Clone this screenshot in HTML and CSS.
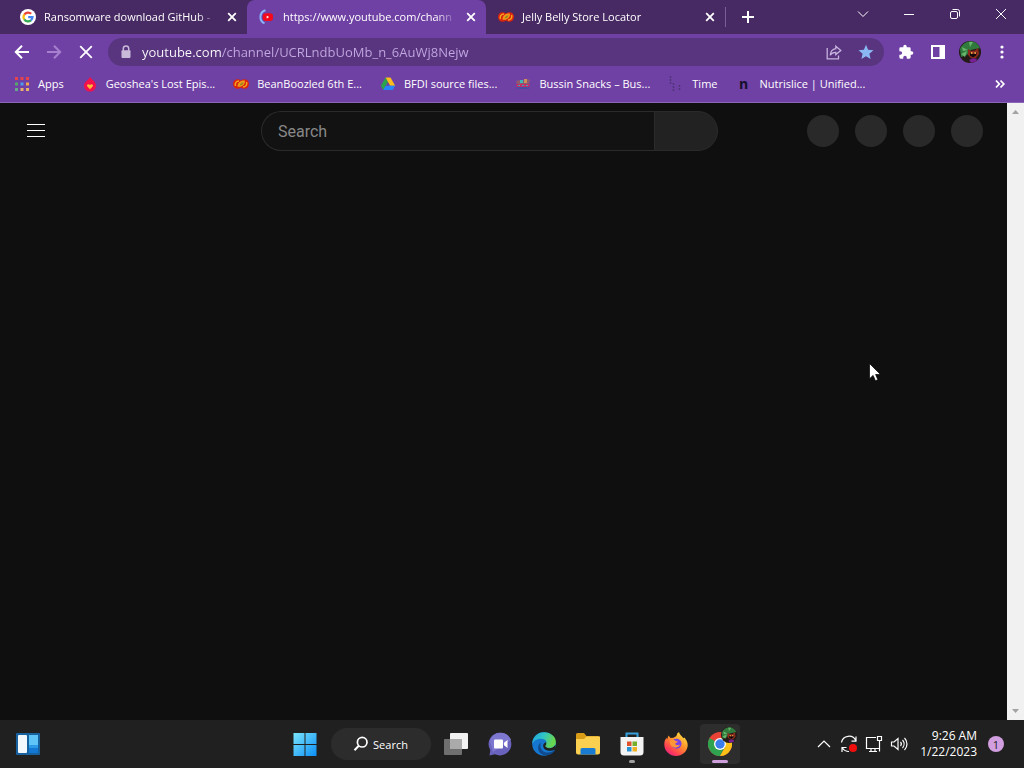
FILE: index.html
```html
<!DOCTYPE html>
<html lang="en">
<head>
  <meta charset="UTF-8" />
  <meta name="viewport" content="width=device-width, initial-scale=1.0"/>
  <title>Desktop</title>
  <link rel="stylesheet" href="styles.css">
</head>
<body>
  <svg class="defs" aria-hidden="true">
    <symbol id="close" viewBox="0 0 16 16"><path d="M4.2 4.2l7.6 7.6M11.8 4.2l-7.6 7.6" stroke="#fff" stroke-width="1.8"/></symbol>
    <symbol id="bean" viewBox="0 0 16 16">
      <ellipse cx="4.600" cy="8" rx="4.600" ry="4.800" fill="#d9240f"/>
      <ellipse cx="11.400" cy="8" rx="4.600" ry="4.800" fill="#d9240f"/>
      <path d="M2.500 10C1.500 7 3.500 5 6 5M13.500 6c1 3-1 5-3.500 5" stroke="#f6a31e" stroke-width="1.500" fill="none"/>
      <path d="M4.500 10.500C4.500 6.500 8 4 12 4.700 12 9 8.500 11.500 4.500 10.500z" fill="#f39a1b"/>
      <path d="M6.500 9.500c.5-2 2-3 4-3.300-.2 2-1.800 3.300-4 3.300z" fill="#96891d"/>
    </symbol>
    <symbol id="avatar" viewBox="0 0 22 22">
      <circle cx="11" cy="11" r="11" fill="#241a16"/>
      <path d="M1 8C3 3 8 0 12 0.300c5 .4 8 3.700 9 7l-5 .7-4 1-4 5-6 2z" fill="#2f7a3c"/>
      <path d="M3 6l6 3-5 1zM10 1l1 5 3-5zM2 13l6-3-2 6z" fill="#69b46c"/>
      <path d="M9 8l3 2 4-.5 3-2.500 1 6-3 4h-5l-3-3z" fill="#8c2a1c"/>
      <path d="M11 11.500l3 1.500 4-1.500-1 3-3 2-3-2z" fill="#140b0c"/>
      <circle cx="12.700" cy="12" r="1" fill="#f0a046"/>
      <circle cx="16.200" cy="12" r="1" fill="#f0a046"/>
      <path d="M10 19l4-2 4 1-1 2.500-5 1.300z" fill="#7a1f93"/>
    </symbol>
  </svg>

  <header class="browser">
    <div class="tab-strip">
      <div class="tab">
        <svg class="icon16" viewBox="0 0 16 16">
          <circle cx="8" cy="8" r="8" fill="#fff"/>
          <g fill="none" stroke-width="2.2">
            <path d="M4.300 5.600A4.500 4.500 0 0 1 11.200 4.800" stroke="#ea4335"/>
            <path d="M4.300 10.500A4.500 4.500 0 0 1 4.300 5.500" stroke="#fbbc05"/>
            <path d="M11 11.400A4.500 4.500 0 0 1 4.300 10.400" stroke="#34a853"/>
            <path d="M8.200 8.100H12.500A4.500 4.500 0 0 1 11 11.400" stroke="#4285f4"/>
          </g>
        </svg>
        <button class="tab-title">Ransomware download GitHub -</button>
        <button class="tab-close" aria-label="Close tab"><svg class="icon16"><use href="#close"/></svg></button>
      </div>
      <div class="tab active">
        <svg class="icon16" viewBox="0 0 16 16">
          <path d="M6.500 1.300A7 7 0 0 0 5.500 14.400" fill="none" stroke="#8ab4f8" stroke-width="2"/>
          <rect x="3.800" y="4.200" width="10.200" height="7.800" rx="3" fill="#f3091c"/>
          <path d="M7.700 6.700l2.400 1.400-2.400 1.400z" fill="#fff"/>
        </svg>
        <button class="tab-title">https://www.youtube.com/chann</button>
        <button class="tab-close" aria-label="Close tab"><svg class="icon16"><use href="#close"/></svg></button>
      </div>
      <div class="tab">
        <svg class="icon16"><use href="#bean"/></svg>
        <button class="tab-title">Jelly Belly Store Locator</button>
        <button class="tab-close" aria-label="Close tab"><svg class="icon16"><use href="#close"/></svg></button>
      </div>
      <button class="new-tab" aria-label="New tab">
        <svg class="icon16" viewBox="0 0 16 16"><path d="M8 2v12M2 8h12" stroke="#fff" stroke-width="2"/></svg>
      </button>
      <div class="window-controls">
        <button aria-label="Search tabs"><svg class="icon16" viewBox="0 0 16 16"><path d="M3 5.500l5 5 5-5"/></svg></button>
        <button aria-label="Minimize"><svg class="icon16" viewBox="0 0 16 16"><path d="M3 8.500h10"/></svg></button>
        <button aria-label="Restore"><svg class="icon16" viewBox="0 0 16 16"><rect x="3.500" y="5.500" width="7" height="7" rx="1.500"/><path d="M5.500 3.500h5a2 2 0 0 1 2 2v5"/></svg></button>
        <button aria-label="Close"><svg class="icon16" viewBox="0 0 16 16"><path d="M3 3l10 10M13 3L3 13"/></svg></button>
      </div>
    </div>

    <div class="toolbar">
      <button class="tool" aria-label="Back"><svg class="icon16" viewBox="0 0 16 16"><path d="M15 8H2M8 1.800L1.800 8 8 14.200" fill="none" stroke="#fff" stroke-width="2"/></svg></button>
      <button class="tool" aria-label="Forward"><svg class="icon16" viewBox="0 0 16 16"><path d="M1 8h13M8 1.800L14.200 8 8 14.200" fill="none" stroke="#a680cf" stroke-width="2"/></svg></button>
      <button class="tool" aria-label="Stop"><svg class="icon16" viewBox="0 0 16 16"><path d="M2.200 2.200l11.600 11.600M13.800 2.200L2.200 13.800" stroke="#fff" stroke-width="1.800"/></svg></button>
      <div class="omnibox">
        <svg class="icon16" viewBox="0 0 16 16"><path d="M5.300 7V4.600a2.700 2.700 0 0 1 5.400 0V7" fill="none" stroke="#c9bad9" stroke-width="1.500"/><rect x="3.500" y="6.300" width="9" height="7.700" rx="1" fill="#c9bad9"/></svg>
        <input class="url" type="text" aria-label="Address" spellcheck="false" value="youtube.com/channel/UCRLndbUoMb_n_6AuWj8Nejw">
        <button class="tool" aria-label="Share"><svg class="icon16" viewBox="0 0 16 16" fill="none" stroke="#c6b2dd" stroke-width="1.300"><path d="M1.200 4v10.800h11.300V11.500"/><path d="M9.800 2.200l5 4.200-5 4.200V8.300C7.200 8.200 5.600 9 4.200 11.200c.3-3.500 2.200-6.100 5.600-6.600z"/></svg></button>
        <button class="tool" aria-label="Bookmark"><svg class="icon16" viewBox="0 0 16 16"><path d="M8 .8l2.100 4.900 5.400.5-4.100 3.600 1.200 5.200L8 12.200 3.400 15l1.200-5.200L.5 6.200l5.400-.5z" fill="#8ab8f2"/></svg></button>
      </div>
      <button class="tool" aria-label="Extensions"><svg class="icon16" viewBox="0 0 24 24"><path d="M20.500 11H19V7a2 2 0 0 0-2-2h-4V3.500a2.500 2.500 0 0 0-5 0V5H4a2 2 0 0 0-2 2v3.800h1.500a2.700 2.700 0 0 1 0 5.400H2V20a2 2 0 0 0 2 2h3.800v-1.500a2.700 2.700 0 0 1 5.400 0V22H17a2 2 0 0 0 2-2v-4h1.500a2.500 2.500 0 0 0 0-5z" fill="#fff"/></svg></button>
      <button class="tool" aria-label="Side panel"><svg class="icon16" viewBox="0 0 16 16"><path fill-rule="evenodd" d="M1 1h14v14H1zM3 3v10h6.500V3z" fill="#fff"/></svg></button>
      <button class="tool" aria-label="Profile"><svg class="avatar"><use href="#avatar"/></svg></button>
      <button class="tool" aria-label="Menu"><svg class="icon16" viewBox="0 0 16 16" fill="#fff"><circle cx="8" cy="3" r="1.600"/><circle cx="8" cy="8" r="1.600"/><circle cx="8" cy="13" r="1.600"/></svg></button>
    </div>

    <nav class="bookmarks">
      <a href="#">
        <svg class="icon16" viewBox="0 0 16 16">
          <path d="M1 1h3v3H1zM6.500 1h3v3h-3zM12 1h3v3h-3z" fill="#e8434a"/>
          <path d="M1 6.500h3v3H1z" fill="#55a86a"/><path d="M6.500 6.500h3v3h-3z" fill="#4d9df0"/><path d="M12 6.500h3v3h-3z" fill="#f0a94a"/>
          <path d="M1 12h3v3H1z" fill="#68a987"/><path d="M6.500 12h3v3h-3zM12 12h3v3h-3z" fill="#e7b06b"/>
        </svg>
        <span>Apps</span>
      </a>
      <a href="#">
        <svg class="icon16" viewBox="0 0 16 16"><path d="M8 .8c1 2.700 6 4.400 6 9A5.800 5.800 0 0 1 8 15.500a5.800 5.800 0 0 1-6-5.700C2 5.800 7 4 8 .8z" fill="#f4104c"/><path d="M8 13.200L5.200 10.300c-.9-1.400.9-3 2.800-1.400 1.900-1.600 3.700 0 2.800 1.400z" fill="#ffba3a"/></svg>
        <span>Geoshea's Lost Epis...</span>
      </a>
      <a href="#">
        <svg class="icon16"><use href="#bean"/></svg>
        <span>BeanBoozled 6th E...</span>
      </a>
      <a href="#">
        <svg class="icon16" viewBox="0 0 16 16"><path d="M5.500 1.500L8 5.800 3.300 14 .8 9.700z" fill="#2ba24c"/><path d="M5.500 1.500h5l4.700 8.200h-5z" fill="#fbbc1c"/><path d="M5.700 9.700h9.500L12.700 14H3.300z" fill="#2684fc"/></svg>
        <span>BFDI source files...</span>
      </a>
      <a href="#">
        <svg class="icon16" viewBox="0 0 16 16"><path d="M1 5l4-1 3 1 4-2 3 1-1 4H2z" fill="#8d5a72"/><path d="M5 4h3v3H5z" fill="#3fb5b7"/><path d="M9 3h3v4H9z" fill="#d08e5b"/><path d="M1 8h14l-1 3H2z" fill="#c12f69"/><path d="M2 12h12" stroke="#3d50a0" stroke-width="1.500"/><path d="M3 9.500h2M7 9.500h2M11 9.500h2" stroke="#38a6bd"/></svg>
        <span>Bussin Snacks – Bus...</span>
      </a>
      <a href="#">
        <svg class="icon16" viewBox="0 0 16 16" stroke="#50347a" stroke-width="1.500" stroke-dasharray="2 1"><path d="M2.500 0v8M5.500 7v8M11.500 9v6"/></svg>
        <span>Time</span>
      </a>
      <a href="#">
        <span class="n-mark">n</span>
        <span>Nutrislice | Unified...</span>
      </a>
      <button class="more" aria-label="More bookmarks"><svg class="icon16" viewBox="0 0 16 16"><path d="M4 4.500L7.300 8 4 11.500M8.500 4.500L11.800 8l-3.300 3.500" fill="none" stroke="#fff" stroke-width="1.800"/></svg></button>
    </nav>
  </header>

  <main class="viewport">
    <div class="page">
      <div class="masthead">
        <div class="masthead-start">
          <button class="guide" aria-label="Guide"><svg class="icon24" viewBox="0 0 24 24"><path d="M3 5.500h18M3 11.500h18M3 17.500h18" stroke="#fff"/></svg></button>
        </div>
        <form class="search">
          <input type="text" placeholder="Search" aria-label="Search">
          <button type="button" aria-label="Submit search"></button>
        </form>
        <div class="placeholders">
          <span></span><span></span><span></span><span></span>
        </div>
      </div>
    </div>
    <div class="scrollbar">
      <button aria-label="Scroll up"><svg class="arrow" viewBox="0 0 9 5"><path d="M4.500 0L9 5H0z"/></svg></button>
      <button aria-label="Scroll down"><svg class="arrow" viewBox="0 0 9 5"><path d="M0 0h9L4.500 5z"/></svg></button>
    </div>
  </main>

  <footer class="taskbar">
    <div class="widgets">
      <button class="task" aria-label="Widgets">
        <svg class="icon24" viewBox="0 0 24 24"><rect y="1" width="24" height="22" rx="1" fill="#17619f"/><rect x="2" y="3" width="9" height="18" rx="1" fill="#f2f8fc"/><rect x="13" y="3" width="9" height="10" fill="#5fc4f8"/><path d="M13 13h9v8h-9z" fill="#1378d4"/><path d="M13 13h9v3h-9z" fill="#2a9ae8"/></svg>
      </button>
    </div>

    <div class="apps">
      <button class="task" aria-label="Start">
        <svg class="icon24" viewBox="0 0 24 24"><defs><linearGradient id="win" x1="0" y1="0" x2="1" y2="1"><stop offset="0" stop-color="#7be5fc"/><stop offset="1" stop-color="#0b8ef5"/></linearGradient></defs><path d="M.5 1H11.500v11H.5zM12.500 1h11v11h-11zM.5 13h11v11H.5zM12.500 13h11v11h-11z" fill="url(#win)"/></svg>
      </button>
      <button class="task-search">
        <svg class="icon16" viewBox="0 0 16 16"><circle cx="9.200" cy="6.200" r="4.800" fill="none" stroke="#fff" stroke-width="1.700"/><path d="M5.800 9.800L1.500 14.200" stroke="#fff" stroke-width="2"/></svg>
        <span>Search</span>
      </button>
      <button class="task" aria-label="Task view">
        <svg class="icon24" viewBox="0 0 24 24"><rect x="6" y="1" width="18" height="16" rx="1" fill="#f1f1f1"/><rect y="7" width="18" height="16" rx="1" fill="#6f6f6f"/><path d="M6 7h12v10H6z" fill="#aaa"/></svg>
      </button>
      <button class="task" aria-label="Chat">
        <svg class="icon24" viewBox="0 0 24 24"><path d="M12.500.8A11.300 11.300 0 1 1 7 22.200L1.500 23.500 2.300 18A11.300 11.300 0 0 1 12.500.8z" fill="#6963bd"/><path d="M12.500.8A11.300 11.300 0 0 1 23 8L5 20 1.800 9A11.300 11.300 0 0 1 12.500.8z" fill="#7d77cf"/><rect x="6" y="7.500" width="9" height="9" rx="1" fill="#fff"/><path d="M16 10.800l3.500-2.800v8L16 13.200z" fill="#fff"/></svg>
      </button>
      <button class="task" aria-label="Edge">
        <svg class="icon24" viewBox="0 0 24 24">
          <defs><linearGradient id="edge" x1="0" y1="0" x2="1" y2=".3"><stop offset="0" stop-color="#1ca5e2"/><stop offset=".5" stop-color="#30c3c5"/><stop offset="1" stop-color="#69d74b"/></linearGradient></defs>
          <circle cx="12" cy="12" r="11.800" fill="#1577cf"/>
          <path d="M.3 12C.3 5 5.300.2 12 .2c7 0 11.800 4.600 11.800 9.300 0 4-3 6.200-6.300 6.200-2.800 0-4.100-1-3.500-2.200.9-1.500 1.100-2.300.7-3.500C13.700 7.500 11 6.500 8 6.800 3.700 7.300 1 9.500.3 12z" fill="url(#edge)"/>
          <path d="M9 10.500c-1.800 4.200.6 9.300 5.500 10 3 .4 6-.7 7.800-2.200.6-.5 1 .1.500.8C18 25 8.500 24.500 6.500 18.500 5.500 15 6.500 12 9 10.500z" fill="#114a8d"/>
          <path d="M14.600 10.200c.4 1.400 0 2.300-.6 3.200-.6 1.200.7 2.300 3.500 2.300 2.600 0 4.900-1.200 5.900-3.500l-.2 5c-4.500 2.800-11 2-12-2.700-.4-1.900 1.300-4.300 3.400-4.300z" fill="#202020"/>
          <path d="M14.600 10.200c.4 1.400 0 2.300-.6 3.200-.6 1.200.7 2.300 3.500 2.300 2.600 0 5.300-1.500 6.100-4.500" fill="none" stroke="#57cf7c"/>
        </svg>
      </button>
      <button class="task" aria-label="File Explorer">
        <svg class="icon24" viewBox="0 0 24 24"><path d="M0 2.500A1.500 1.500 0 0 1 1.500 1H8l2.500 3H22a1.500 1.500 0 0 1 1.500 1.500V9H0z" fill="#d99c16"/><path d="M0 7h8l2.500-2.500H24v16a2 2 0 0 1-2 2H2a2 2 0 0 1-2-2z" fill="#fbd051"/><path d="M4.500 17.500a1.500 1.500 0 0 1 1.500-1.500h12a1.500 1.500 0 0 1 1.500 1.500v5h-15z" fill="#1a7bd3"/></svg>
      </button>
      <button class="task open" aria-label="Microsoft Store">
        <svg class="icon24" viewBox="0 0 24 24"><path d="M6.500 6V1.500h11V6" fill="none" stroke="#36a0dc" stroke-width="2"/><path d="M.5 5h23v15a3.500 3.500 0 0 1-3.500 3.500H4A3.500 3.500 0 0 1 .5 20z" fill="#f3f3f3"/><path d="M7 9.500h4.500V14H7z" fill="#e0512e"/><path d="M12.500 9.500H17V14h-4.500z" fill="#77ae2c"/><path d="M7 15h4.500v4.500H7z" fill="#2a93d5"/><path d="M12.500 15H17v4.500h-4.500z" fill="#efb223"/></svg>
      </button>
      <button class="task" aria-label="Firefox">
        <svg class="icon24" viewBox="0 0 24 24">
          <defs><linearGradient id="fox" x1=".9" y1="0" x2=".2" y2="1"><stop offset="0" stop-color="#fff04a"/><stop offset=".45" stop-color="#ff9329"/><stop offset=".8" stop-color="#ff3d56"/><stop offset="1" stop-color="#e0218a"/></linearGradient></defs>
          <path d="M4.500 3.500L6.500 6l3-.3C11.500 5 13 4 13.200 1.500l1.800-1.500c.3 2.300 3 4 4.500 6.300l1-.8c2 2.500 3.300 5 3.200 7.700C23.500 19.500 18 24 12 24S.5 19.300.3 13C.2 10 1 7.500 2.500 5.800l.5 1.700z" fill="url(#fox)"/>
          <circle cx="12.500" cy="11.800" r="5" fill="#7542e5"/>
          <path d="M6 8.500c2-1.300 4.300-.8 5.700.5l2.300.4c-.3 1.200-2.700 1.400-2.700 2.200 0 1.600 2.500 2.300 4.700 1-.7 3-5.500 4.200-8.200 1.700C6 12.800 5.500 10.500 6 8.500z" fill="#ff9637"/>
        </svg>
      </button>
      <button class="task current" aria-label="Chrome">
        <svg class="icon24" viewBox="0 0 24 24">
          <circle cx="12" cy="12" r="12" fill="#ea4335"/>
          <path d="M12 12L1.600 6A12 12 0 0 0 12 24l5.200-9z" fill="#2fa34f"/>
          <path d="M12 6h10.400A12 12 0 0 1 12 24l5.200-9z" fill="#fbc116"/>
          <circle cx="12" cy="12" r="6" fill="#fff"/><circle cx="12" cy="12" r="4.700" fill="#3b7ded"/>
        </svg>
        <svg class="profile-badge" viewBox="0 0 22 22"><use href="#avatar" width="22" height="22"/></svg>
      </button>
    </div>

    <div class="tray">
      <button aria-label="Show hidden icons"><svg class="icon20" viewBox="0 0 20 20"><path d="M4 13l6-6 6 6"/></svg></button>
      <button aria-label="Updates"><svg class="icon20" viewBox="0 0 20 20"><path d="M2.500 8.500a7.500 7.500 0 0 1 14.300-1.700M17 2.500v4.700h-4.500M10 17.500a7.500 7.500 0 0 1-6.500-3.500M3 18v-4.500h4.500"/><circle class="alert" cx="14" cy="14" r="4"/></svg></button>
      <button aria-label="Network"><svg class="icon20" viewBox="0 0 20 20"><path d="M12 3.500H2.500v11H15.500M5 17.500h8M7 14.500v3M11 14.500v3M13.500 2.500h4v4h-4zM15.500 6.500v11"/></svg></button>
      <button aria-label="Volume"><svg class="icon20" viewBox="0 0 20 20"><path d="M2.500 8h2.500l4-3.500v11L5 12H2.500zM11.500 8a3 3 0 0 1 0 4M13.500 6a6 6 0 0 1 0 8M15.500 4a8.500 8.500 0 0 1 0 12"/></svg></button>
      <button class="clock"><span>9:26 AM</span><span>1/22/2023</span></button>
      <button class="count">1</button>
    </div>
  </footer>

  <svg class="cursor" viewBox="0 0 12 19"><path d="M.5 .5v15.200l3.600-3.300 2.300 5.400 2.500-1.100-2.300-5.200h4.900z" fill="#fff" stroke="#000" stroke-width=".7"/></svg>
</body>
</html>
```
FILE: styles.css
```css
* {
  box-sizing: border-box;
}

body {
  margin: 0;
  min-height: 100vh;
  display: flex;
  flex-direction: column;
  background: #0f0f0f;
  color: #fff;
  font-family: "Open Sans", "Noto Sans", sans-serif;
  font-size: 11px;
}

button {
  display: flex;
  align-items: center;
  justify-content: center;
  padding: 0;
  border: none;
  background: none;
  color: inherit;
  font: inherit;
}

a {
  color: inherit;
  text-decoration: none;
}

svg {
  display: block;
  flex: none;
}

.defs {
  position: absolute;
  width: 0;
  height: 0;
}

.icon16 {
  width: 16px;
  height: 16px;
}

.icon20 {
  width: 20px;
  height: 20px;
}

.icon24 {
  width: 24px;
  height: 24px;
}

/* browser frame */
.browser {
  background: #6f41a4;
  border-bottom: 1px solid #8a66b8;
}

.tab-strip {
  display: flex;
  height: 34px;
  padding-left: 8px;
  background: #472963;
}

.tab {
  flex: 0 1 239px;
  min-width: 0;
  display: flex;
  align-items: center;
  gap: 6px;
  padding: 0 7px 0 12px;
}

.tab.active {
  background: #6f41a4;
  border-radius: 8px 8px 0 0;
}

.tab-title {
  flex: 1;
  min-width: 0;
  padding: 0 0 2px 2px;
  justify-content: flex-start;
  overflow: hidden;
  white-space: nowrap;
  mask-image: linear-gradient(to right, #000 88%, transparent);
}

.new-tab {
  width: 44px;
  align-self: center;
  border-left: 1px solid #7a5f95;
  height: 20px;
}

.window-controls {
  display: flex;
  margin-left: auto;
  height: 28px;
}

.window-controls button {
  width: 46px;
}

.window-controls svg {
  fill: none;
  stroke: #fff;
}

.toolbar {
  display: flex;
  align-items: center;
  height: 36px;
  padding: 0 6px;
}

.tool {
  width: 32px;
  height: 28px;
}

.omnibox {
  flex: 1;
  display: flex;
  align-items: center;
  height: 28px;
  margin: 0 6px;
  padding: 0 2px 0 10px;
  border-radius: 14px;
  background: #593580;
}

/* host part is white, the path is dimmed */
.url {
  flex: 1;
  min-width: 0;
  margin-left: 8px;
  padding: 0;
  border: none;
  outline: none;
  background: linear-gradient(to right, #fff 80px, #c3a9e0 80px);
  background-clip: text;
  -webkit-background-clip: text;
  color: transparent;
  font: 13px "Open Sans", "Noto Sans", sans-serif;
}

.avatar {
  width: 22px;
  height: 22px;
}

.bookmarks {
  display: flex;
  align-items: center;
  gap: 18px;
  height: 32px;
  padding: 0 16px 5px 14px;
}

.bookmarks a {
  display: flex;
  align-items: center;
  gap: 8px;
  white-space: nowrap;
}

.n-mark {
  width: 16px;
  color: #15102a;
  font-size: 14px;
  font-weight: bold;
  line-height: 16px;
  text-align: center;
}

.more {
  margin-left: auto;
}

/* page */
.viewport {
  flex: 1;
  display: flex;
}

.page {
  flex: 1;
  font-family: Roboto, sans-serif;
}

.masthead {
  display: flex;
  align-items: center;
  justify-content: space-between;
  height: 56px;
  padding-right: 24px;
}

.masthead-start {
  width: 172px;
  padding-left: 24px;
}

.search {
  display: flex;
  flex: 0 1 457px;
  height: 40px;
}

.search input {
  flex: 1;
  min-width: 0;
  padding: 0 16px;
  border: 1px solid #2b2b2b;
  border-right: none;
  border-radius: 20px 0 0 20px;
  outline: none;
  background: #121212;
  color: #fff;
  font: 16px Roboto, sans-serif;
}

.search input::placeholder {
  color: #888;
}

.search button {
  width: 64px;
  border: 1px solid #2b2b2b;
  border-radius: 0 20px 20px 0;
  background: #222;
}

.placeholders {
  display: flex;
  gap: 16px;
}

.placeholders span {
  width: 32px;
  height: 32px;
  border-radius: 50%;
  background: #292929;
}

.scrollbar {
  width: 17px;
  display: flex;
  flex-direction: column;
  justify-content: space-between;
  background: #f1f1f1;
}

.scrollbar button {
  height: 18px;
}

.arrow {
  width: 7px;
  height: 4px;
  fill: #a3a3a3;
}

/* taskbar */
.taskbar {
  display: grid;
  grid-template-columns: 1fr auto 1fr;
  align-items: center;
  height: 48px;
  background: #202020;
}

.widgets {
  padding-left: 6px;
}

.apps {
  display: flex;
  align-items: center;
}

.task {
  position: relative;
  width: 44px;
  height: 40px;
}

.task-search {
  gap: 4px;
  width: 100px;
  height: 32px;
  margin: 0 3px 0 4px;
  border-radius: 16px;
  background: #2c2c2c;
}

.task.open::after,
.task.current::after {
  content: "";
  position: absolute;
  bottom: 1px;
  left: 50%;
  width: 6px;
  height: 3px;
  margin-left: -3px;
  border-radius: 2px;
  background: #a0a0a0;
}

.task.current {
  width: 40px;
  margin: 0 2px;
  border-radius: 4px;
  background: #2d2d2d;
}

.task.current::after {
  width: 16px;
  margin-left: -8px;
  background: #cf9fdc;
}

.profile-badge {
  position: absolute;
  top: 3px;
  right: 3px;
  width: 16px;
  height: 16px;
}

.tray {
  display: flex;
  align-items: center;
  justify-content: flex-end;
  gap: 5px;
  padding-right: 20px;
}

.tray svg {
  fill: none;
  stroke: #fff;
  stroke-width: 1.2;
}

.tray .alert {
  fill: #f20d0d;
  stroke: none;
}

.clock {
  flex-direction: column;
  align-items: flex-end;
  margin: 0 6px;
  font-size: 12px;
  line-height: 16px;
}

.count {
  width: 16px;
  height: 16px;
  border-radius: 50%;
  background: #d19ee0;
  color: #202020;
}

.cursor {
  position: absolute;
  left: 869px;
  top: 363px;
  width: 12px;
  height: 19px;
}
```
